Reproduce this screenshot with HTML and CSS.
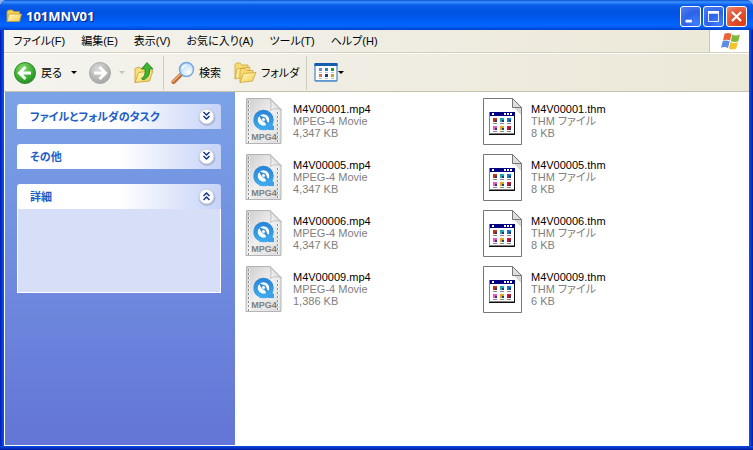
FILE: index.html
```html
<!DOCTYPE html>
<html lang="ja">
<head>
<meta charset="utf-8">
<title>101MNV01</title>
<link rel="stylesheet" href="styles.css">
</head>
<body>
<svg class="defs" aria-hidden="true">
  <defs>
    <linearGradient id="page" x1="0" y1="0" x2="1" y2="1"><stop offset="0" stop-color="#cbcbcb"/><stop offset=".5" stop-color="#f0f0f0"/><stop offset="1" stop-color="#dcdcdc"/></linearGradient>
    <linearGradient id="fold" x1="0" y1="1" x2="1" y2="0"><stop offset="0" stop-color="#fff"/><stop offset="1" stop-color="#bbb"/></linearGradient>
    <linearGradient id="qt" x1="0" y1="0" x2="0" y2="1"><stop offset="0" stop-color="#2a87d8"/><stop offset="1" stop-color="#3fa9ec"/></linearGradient>
    <linearGradient id="yellow" x1="0" y1="0" x2="1" y2="1"><stop offset="0" stop-color="#fffbc4"/><stop offset="1" stop-color="#f3cb4c"/></linearGradient>
    <radialGradient id="green" cx=".4" cy=".3" r=".75"><stop offset="0" stop-color="#8bdc72"/><stop offset=".6" stop-color="#3fae35"/><stop offset="1" stop-color="#238a22"/></radialGradient>
    <radialGradient id="grey" cx=".4" cy=".3" r=".75"><stop offset="0" stop-color="#dadada"/><stop offset=".6" stop-color="#b9b9b8"/><stop offset="1" stop-color="#a2a2a2"/></radialGradient>
    <radialGradient id="lens" cx=".65" cy=".7" r=".8"><stop offset="0" stop-color="#fff"/><stop offset="1" stop-color="#a5d2f6"/></radialGradient>
  </defs>
  <symbol id="movie" viewBox="0 0 48 48">
    <path d="M6.500 1.500H30l11 11v34h-35z" fill="url(#page)" stroke="#b4b4b4"/>
    <path d="M9 4V46M38 15V46" stroke="#8d8d8d" stroke-width="2" stroke-dasharray="2 2"/>
    <path d="M9.500 4V46M38.500 15V46" stroke="#fff" stroke-dasharray="2 2"/>
    <path d="M30 1.500 41 12.500Q34 10.500 30.500 13.500 32 7 30 1.500z" fill="url(#fold)" stroke="#aaa" stroke-width=".7"/>
    <circle cx="23.500" cy="23" r="8" fill="#f6fbff" stroke="url(#qt)" stroke-width="4.500"/>
    <path d="M24 23 34 29V33H28z" fill="#3ba4e8"/>
    <path d="m18.500 18 7 2.500 2.500 6-6-2.500z" fill="#3791da"/><circle cx="23.500" cy="22.500" r="1.500" fill="#fff"/>
  </symbol>
  <symbol id="thumb" viewBox="0 0 48 48">
    <path d="M5.500 1.500H34.500L43.500 10.500V47.500H5.500z" fill="#fff" stroke="#777"/>
    <path d="M34.500 1.500V10.500H43.500z" fill="#ddd" stroke="#777"/>
    <path d="M36 11h7v7z" fill="#d8d8d8"/>
    <path d="M11 15h26v23H11z" fill="#111"/><path d="M11 15h25v22H11z" fill="#808080"/>
    <path d="M12 19h24v17H12z" fill="#fff"/><path d="M12 15h25v4H12z" fill="#000084"/>
    <path d="M14 16h2v2h-2zM26 16h2v2h-2zM29 16h2v2h-2zM32 16h2v2h-2z" fill="#fff"/>
    <path d="M15 21h4v4h-4z" fill="#b53a19"/><path d="M22 21h4v4h-4z" fill="#17a3b8"/><path d="M29 21h4v4h-4z" fill="#087bce"/>
    <path d="M15 29h4v4h-4z" fill="#e05ab8"/><path d="M22 29h4v4h-4z" fill="#e4a520"/><path d="M29 29h4v4h-4z" fill="#bd1b31"/>
    <path d="M17 23h2v2h-2zM24 23h2v2h-2zM31 23h2v2h-2zM17 31h2v2h-2zM24 31h2v2h-2zM31 31h2v2h-2z" fill="#33337b"/>
    <path d="M15 26h4v1h-4zM22 26h4v1h-4zM29 26h4v1h-4zM15 34h4v1h-4zM22 34h4v1h-4zM29 34h4v1h-4z" fill="#8a8a8a"/>
  </symbol>
  <symbol id="down" viewBox="0 0 20 20">
    <circle cx="10" cy="10.500" r="8.500" fill="#a9b6d8"/><circle cx="9.500" cy="9.500" r="7.500" fill="#fff" stroke="#c5cbdd"/>
    <path d="m6.500 5 3 3 3-3m-6 4 3 3 3-3" fill="none" stroke="#17358a" stroke-width="1.500"/>
  </symbol>
  <symbol id="up" viewBox="0 0 20 20">
    <circle cx="10" cy="10.500" r="8.500" fill="#a9b6d8"/><circle cx="9.500" cy="9.500" r="7.500" fill="#fff" stroke="#c5cbdd"/>
    <path d="m6.500 9 3-3 3 3m-6 4 3-3 3 3" fill="none" stroke="#17358a" stroke-width="1.500"/>
  </symbol>
</svg>

<div class="window">
  <header class="titlebar">
    <svg class="title-icon" viewBox="0 0 16 16" aria-hidden="true"><path d="M1 13V3.500L2.500 2h4L8 3.500h5.500V6" fill="#f1cf5b" stroke="#b98e23" stroke-width=".8"/><path d="M3 6h12.500L13.500 13.500H1z" fill="url(#yellow)" stroke="#c9992c" stroke-width=".8"/></svg>
    <h1>101MNV01</h1>
    <div class="controls">
      <button class="control" aria-label="最小化"><svg viewBox="0 0 21 21"><path d="M5 14h7v3H5z" fill="#fff"/></svg></button>
      <button class="control" aria-label="最大化"><svg viewBox="0 0 21 21"><path d="M5 5h11v11H5z" fill="none" stroke="#fff"/><path d="M4.500 4.500h12v3h-12z" fill="#fff"/></svg></button>
      <button class="control close" aria-label="閉じる"><svg viewBox="0 0 21 21"><path d="m5.500 5.500 10 10m0-10-10 10" stroke="#fff" stroke-width="2.400"/></svg></button>
    </div>
  </header>

  <div class="frame">
    <div class="menu-row">
      <nav class="menu">
        <button>ファイル(F)</button><button>編集(E)</button><button>表示(V)</button><button>お気に入り(A)</button><button>ツール(T)</button><button>ヘルプ(H)</button>
      </nav>
      <div class="brand">
        <svg viewBox="0 0 20 18" aria-hidden="true">
          <path d="M3.500 1.800Q7 0 10.500 2L9 8.500Q5.500 6.800 2 8.500z" fill="#ee6336"/>
          <path d="M11.300 2.500Q15 4.300 19 2.500L17.300 9.300Q13.500 11 9.800 9z" fill="#7dba3b"/>
          <path d="M1.700 9.300Q5 7.800 8.700 9.500L7 16Q3.500 14.300 0 15.800z" fill="#5b8ee0"/>
          <path d="M9.500 10Q13.500 11.800 17 10L15.300 16.500Q11.500 18.300 7.900 16.500z" fill="#f5c42c"/>
        </svg>
      </div>
    </div>

    <div class="toolbar">
      <button class="tool back"><svg class="i24" viewBox="0 0 24 24" aria-hidden="true"><circle cx="12" cy="12" r="10.500" fill="url(#green)" stroke="#2c8e2b"/><path d="M18 12H7m5.500-6L6.500 12l6 6" fill="none" stroke="#fff" stroke-width="3"/></svg><span>戻る</span></button>
      <button class="drop" aria-label="戻る履歴"></button>
      <button class="tool forward" aria-label="進む" disabled><svg class="i24" viewBox="0 0 24 24"><circle cx="12" cy="12" r="10.500" fill="url(#grey)" stroke="#aaa"/><path d="M6 12h11m-5.500-6 6 6-6 6" fill="none" stroke="#fff" stroke-width="3"/></svg></button>
      <button class="drop" aria-label="進む履歴" disabled></button>
      <button class="tool" aria-label="上へ"><svg class="i24" viewBox="0 0 24 24"><path d="M3 21.500V7.500l4-1.500 2 1.500 5-1V18z" fill="#f8df78" stroke="#c9a02f" stroke-width=".8"/><path d="M3 21.500 6.500 11.500 21 9.500 17.500 20z" fill="url(#yellow)" stroke="#c9a02f" stroke-width=".8"/><path d="M9.500 17.500Q14 15.500 13 8H9.500L15 1.500 21 8h-3.500Q18.500 16.500 11 19z" fill="#3fb62f" stroke="#217d20" stroke-width=".8"/></svg></button>
      <span class="rule"></span>
      <button class="tool"><svg class="i24" viewBox="0 0 24 24" aria-hidden="true"><path d="m9.500 14-7 7" stroke="#bf6a34" stroke-width="4" stroke-linecap="round"/><path d="m9 13.500-7 7" stroke="#f2b078" stroke-width="1.500" stroke-linecap="round"/><circle cx="15.500" cy="8.500" r="7" fill="url(#lens)" stroke="#7ba5dc" stroke-width="1.500"/><path d="M11 8Q12 4.500 15.500 4" stroke="#fff" stroke-width="1.500" fill="none"/></svg><span>検索</span></button>
      <button class="tool folders"><svg class="i24" viewBox="0 0 24 24" aria-hidden="true"><path d="M2 18V3.500L3.500 2H7l2 2h6v3" fill="#f7da70" stroke="#cda238" stroke-width=".8"/><path d="m2 18 2-10L17 6l-2 9z" fill="url(#yellow)" stroke="#cda238" stroke-width=".8"/><path d="M7 21.500V9l1.500-1.500H12l2 2h6v3" fill="#f7da70" stroke="#cda238" stroke-width=".8"/><path d="m7 21.500 3.500-9L23 11.500 19.500 20z" fill="url(#yellow)" stroke="#cda238" stroke-width=".8"/></svg><span>フォルダ</span></button>
      <span class="rule"></span>
      <button class="tool" aria-label="表示"><svg class="i24" viewBox="0 0 24 24"><path d="M1 3h22v17H1z" fill="#fff" stroke="#246eb9"/><path d="M.5 2h23v3H.5z" fill="#175fae"/><path d="M1.500 19h21v1.500h-21z" fill="#5d98d0"/><path d="M5 7h3v3H5z" fill="#7885b5"/><path d="M11 7h3v3h-3z" fill="#2e80c1"/><path d="M17 7h3v3h-3z" fill="#29933a"/><path d="M5 13h3v3H5z" fill="#df725d"/><path d="M11 13h3v3h-3z" fill="#233782"/><path d="M17 13h3v3h-3z" fill="#c9a427"/><path d="M5 11.500h3m3 0h3m3 0h3M5 17.500h3m3 0h3m3 0h3" stroke="#b9c4d0"/></svg><i class="caret"></i></button>
    </div>

    <div class="content">
      <aside class="sidebar">
        <section><button class="panel-head"><span>ファイルとフォルダのタスク</span><svg><use href="#down"/></svg></button></section>
        <section><button class="panel-head"><span>その他</span><svg><use href="#down"/></svg></button></section>
        <section><button class="panel-head"><span>詳細</span><svg><use href="#up"/></svg></button><div class="panel-body"></div></section>
      </aside>
      <main>
        <ul class="files">
          <li><svg viewBox="0 0 48 48"><use href="#movie"/><text x="24" y="43" text-anchor="middle" class="badge">MPG4</text></svg><div><b>M4V00001.mp4</b><p>MPEG-4 Movie</p><p>4,347 KB</p></div></li>
          <li><svg viewBox="0 0 48 48"><use href="#thumb"/></svg><div><b>M4V00001.thm</b><p>THM ファイル</p><p>8 KB</p></div></li>
          <li><svg viewBox="0 0 48 48"><use href="#movie"/><text x="24" y="43" text-anchor="middle" class="badge">MPG4</text></svg><div><b>M4V00005.mp4</b><p>MPEG-4 Movie</p><p>4,347 KB</p></div></li>
          <li><svg viewBox="0 0 48 48"><use href="#thumb"/></svg><div><b>M4V00005.thm</b><p>THM ファイル</p><p>8 KB</p></div></li>
          <li><svg viewBox="0 0 48 48"><use href="#movie"/><text x="24" y="43" text-anchor="middle" class="badge">MPG4</text></svg><div><b>M4V00006.mp4</b><p>MPEG-4 Movie</p><p>4,347 KB</p></div></li>
          <li><svg viewBox="0 0 48 48"><use href="#thumb"/></svg><div><b>M4V00006.thm</b><p>THM ファイル</p><p>8 KB</p></div></li>
          <li><svg viewBox="0 0 48 48"><use href="#movie"/><text x="24" y="43" text-anchor="middle" class="badge">MPG4</text></svg><div><b>M4V00009.mp4</b><p>MPEG-4 Movie</p><p>1,386 KB</p></div></li>
          <li><svg viewBox="0 0 48 48"><use href="#thumb"/></svg><div><b>M4V00009.thm</b><p>THM ファイル</p><p>6 KB</p></div></li>
        </ul>
      </main>
    </div>
  </div>
</div>
</body>
</html>
```
FILE: styles.css
```css
* { box-sizing: border-box; margin: 0; padding: 0; }
body {
  background: #8fb0ee;
  color: #000;
  font: 11px/16px "Liberation Sans", "Noto Sans CJK JP", sans-serif;
  font-feature-settings: "palt";
}
button { border: 0; background: none; color: inherit; font: inherit; font-feature-settings: inherit; white-space: nowrap; }
svg { display: block; flex: none; }
.defs { position: absolute; width: 0; height: 0; }

.window {
  display: flex;
  flex-direction: column;
  min-height: 100vh;
  border-radius: 7px 7px 0 0;
  overflow: hidden;
  background: linear-gradient(90deg, #0019b8, #0a4ce6 3px, #0a4ce6 calc(100% - 3px), #0019a0);
}
.titlebar {
  display: flex;
  align-items: center;
  height: 30px;
  padding: 2px 6px 0;
  background: linear-gradient(#0a4fd0, #3b93ff 2px, #0a5ceb 5px, #0053e1 12px, #0058ee 18px, #0066ff 25px, #005cf5 27px, #0040c8);
}
.title-icon { width: 16px; height: 16px; }
h1 {
  flex: 1;
  margin-left: 4px;
  color: #fff;
  font: bold 13px/18px "Open Sans", sans-serif;
  text-shadow: 1px 1px 1px #0a1883;
}
.controls { display: flex; gap: 2px; }
.control {
  width: 21px;
  height: 21px;
  border: 1px solid #fff;
  border-radius: 3px;
  background: radial-gradient(circle at 80% 85%, #3f7dff, #2c62e8 50%, #5580ee);
}
.control svg { width: 19px; height: 19px; }
.close { background: radial-gradient(circle at 80% 85%, #d8401a, #e0502f 50%, #ee8c72); }

.frame {
  flex: 1;
  display: flex;
  flex-direction: column;
  margin: 0 4px;
  background: linear-gradient(90deg, #f4f3ee, #ebe8d7);
}
.menu-row {
  display: flex;
  height: 23px;
  border-bottom: 1px solid #d5d1c0;
}
.menu { flex: 1; display: flex; align-items: center; gap: 16px; padding-left: 9px; }
.brand {
  display: flex;
  align-items: center;
  width: 40px;
  padding-left: 11px;
  border-left: 1px solid #cbc8b7;
  background: #fff;
}
.brand svg { width: 20px; height: 18px; }

.toolbar {
  display: flex;
  align-items: center;
  height: 39px;
  padding-left: 9px;
  border-top: 1px solid #fff;
  border-bottom: 1px solid #c6c2ad;
}
.tool { display: flex; align-items: center; gap: 4px; }
.i24 { width: 24px; height: 24px; }
.drop { display: flex; justify-content: center; width: 20px; }
.drop::before, .caret { content: ""; border: 3px solid transparent; border-top-color: #000; border-bottom: 0; }
.drop:disabled::before { border-top-color: #c4c2b9; }
.caret { margin-left: -4px; }
.back { width: 51px; }
.forward { margin-left: 4px; }
.rule { width: 1px; height: 34px; margin: 0 7px 0 6px; background: #cfccbd; }
.tool + .rule { margin-left: 7px; }
.folders { margin-left: 12px; }

.content { flex: 1; display: flex; border-left: 1px solid #fff; border-bottom: 1px solid #fff; }
.window::after { content: ""; height: 4px; background: linear-gradient(#0a4ce6, #0019a0); }
.sidebar {
  display: flex;
  flex-direction: column;
  gap: 15px;
  width: 230px;
  padding: 12px 14px 12px 12px;
  background: linear-gradient(#7ba2e7, #6375d6);
}
.panel-head {
  display: flex;
  align-items: center;
  justify-content: space-between;
  width: 100%;
  height: 25px;
  padding: 0 4px 0 13px;
  border-radius: 3px 3px 0 0;
  background: linear-gradient(90deg, #fff 50%, #c6d3f7);
  color: #215dc6;
  font-weight: bold;
}
.panel-head svg { width: 20px; height: 20px; }
.panel-body { height: 84px; border: 1px solid #fff; border-top: 0; background: #d6dff7; }

main { flex: 1; background: #fff; }
.files {
  display: grid;
  grid-template-columns: repeat(auto-fill, 238px);
  row-gap: 8px;
  padding: 5px 0 5px 5px;
  list-style: none;
}
.files li { display: flex; align-items: center; gap: 5px; height: 48px; line-height: 12px; }
.files svg { width: 48px; height: 48px; }
.files b { display: block; font-weight: normal; }
.files p { color: #808080; }
.badge { font: bold 9px "Liberation Sans", sans-serif; fill: #808080; }
```
